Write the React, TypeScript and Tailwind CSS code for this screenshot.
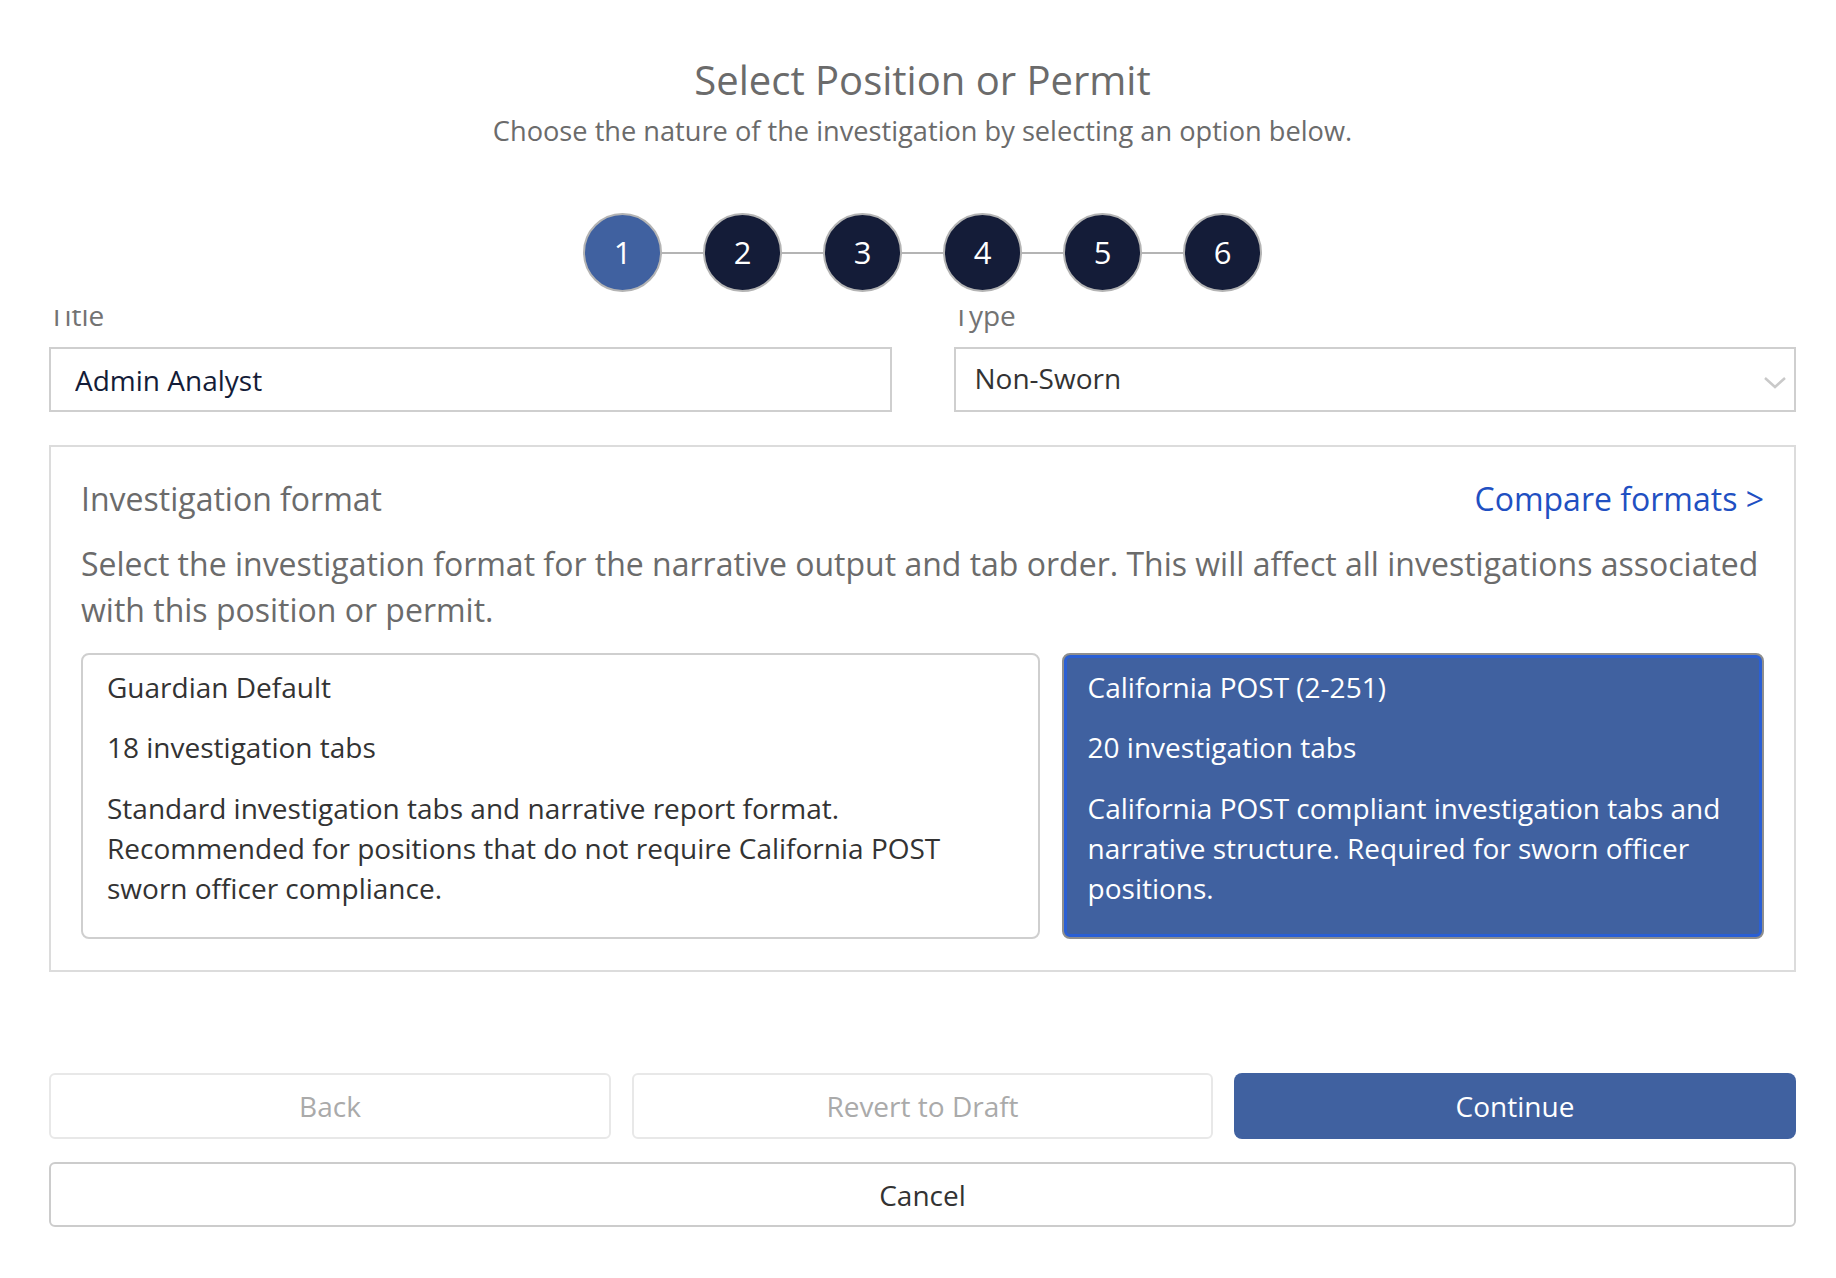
import { useState } from 'react';

interface Format {
  id: string;
  name: string;
  tabs: number;
  description: string;
}

const STEPS = [1, 2, 3, 4, 5, 6];

const FORMATS: Format[] = [
  {
    id: 'guardian',
    name: 'Guardian Default',
    tabs: 18,
    description:
      'Standard investigation tabs and narrative report format. Recommended for positions that do not require California POST sworn officer compliance.'
  },
  {
    id: 'post',
    name: 'California POST (2-251)',
    tabs: 20,
    description:
      'California POST compliant investigation tabs and narrative structure. Required for sworn officer positions.'
  }
];

function Stepper({ current }: { current: number }) {
  return (
    <div className="flex items-center justify-center">
      {STEPS.map((step, i) => (
        <div key={step} className="flex items-center">
          {i > 0 && <div className="h-[2px] w-[41px] bg-[#b4b4b4]" />}
          <div
            className={`flex h-[79px] w-[79px] items-center justify-center rounded-full border-2 border-[#b4b4b4] text-[31px] text-white ${
              step === current ? 'bg-[#4061a0]' : 'bg-[#141c38]'
            }`}
          >
            {step}
          </div>
        </div>
      ))}
    </div>
  );
}

export default function App() {
  const [title, setTitle] = useState('Admin Analyst');
  const [type, setType] = useState('non-sworn');
  const [format, setFormat] = useState('post');

  return (
    <div className="min-h-screen bg-white pl-[49px] pr-[40px] font-['Open_Sans',sans-serif]">
      <div className="relative z-10 h-[310px] bg-white pt-[53px] text-center">
        <h1 className="text-[40px] leading-[54px] text-[#6b6b6b]">Select Position or Permit</h1>
        <p className="mt-[6px] text-[27.2px] leading-[36px] text-[#6b6b6b]">
          Choose the nature of the investigation by selecting an option below.
        </p>
        <div className="mt-[64px]">
          <Stepper current={1} />
        </div>
      </div>

      {/* Scrolled form body */}
      <div className="overflow-hidden">
        <div className="-mt-[14px]">
          <div className="grid grid-cols-2 gap-[62px]">
            <div>
              <label className="block text-[28px] leading-[38px] text-[#737373]">Title</label>
              <input
                value={title}
                onChange={(e) => setTitle(e.target.value)}
                className="mt-[13px] h-[65px] w-full border-2 border-[#cfcfcf] bg-white pl-[24px] text-[28px] text-[#141c38] outline-none"
              />
            </div>
            <div>
              <label className="block text-[28px] leading-[38px] text-[#737373]">Type</label>
              <div className="relative mt-[13px]">
                <select
                  value={type}
                  onChange={(e) => setType(e.target.value)}
                  className="h-[65px] w-full appearance-none border-2 border-[#cfcfcf] bg-white pb-[4px] pl-[19px] text-[28px] text-[#333333] outline-none"
                >
                  <option value="non-sworn">Non-Sworn</option>
                  <option value="sworn">Sworn</option>
                </select>
                <svg
                  className="pointer-events-none absolute right-[9px] top-[29px]"
                  width="24"
                  height="14"
                  viewBox="0 0 24 14"
                  fill="none"
                >
                  <polyline points="2,2 12,11 22,2" stroke="#c9c9c9" strokeWidth="2.5" />
                </svg>
              </div>
            </div>
          </div>

          {/* Investigation format */}
          <div className="mt-[33px] border-2 border-[#dcdcdc] px-[30px] pb-[31px] pt-[30px]">
            <div className="flex items-center justify-between">
              <h2 className="text-[32px] leading-[44px] text-[#6b6b6b]">Investigation format</h2>
              <a href="#" className="text-[32px] leading-[44px] text-[#1f50c2]">
                Compare formats &gt;
              </a>
            </div>
            <p className="mt-[20px] text-[32px] leading-[46px] text-[#6b6b6b]">
              Select the investigation format for the narrative output and tab order. This will affect all
              investigations associated with this position or permit.
            </p>

            <div className="mt-[20px] grid grid-cols-[958fr_702fr] gap-[22px]">
              {FORMATS.map((f) => {
                const selected = f.id === format;
                return (
                  <button
                    key={f.id}
                    type="button"
                    onClick={() => setFormat(f.id)}
                    className={`rounded-[8px] border-2 px-[24px] pb-[29px] pt-[12px] text-left text-[28px] leading-[40px] ${
                      selected
                        ? 'border-[#8e8e8e] bg-[#4061a0] text-white shadow-[inset_0_0_0_3px_#2a5fd4]'
                        : 'border-[#cfcfcf] bg-white text-[#333333]'
                    }`}
                  >
                    <div>{f.name}</div>
                    <div className="mt-[20px]">{f.tabs} investigation tabs</div>
                    <div className="mt-[21px]">{f.description}</div>
                  </button>
                );
              })}
            </div>
          </div>

          {/* Actions */}
          <div className="mt-[101px] grid grid-cols-[562fr_581fr_562fr] gap-[21px]">
            <button
              disabled
              className="h-[66px] rounded-[6px] border-2 border-[#e8e8e8] bg-white text-[28px] text-[#aaaaaa]"
            >
              Back
            </button>
            <button
              disabled
              className="h-[66px] rounded-[6px] border-2 border-[#e8e8e8] bg-white text-[28px] text-[#aaaaaa]"
            >
              Revert to Draft
            </button>
            <button className="h-[66px] rounded-[8px] bg-[#4061a0] text-[28px] text-white">Continue</button>
          </div>
          <button className="mt-[23px] h-[65px] w-full rounded-[6px] border-2 border-[#cccccc] bg-white text-[28px] text-[#333333]">
            Cancel
          </button>
        </div>
      </div>
    </div>
  );
}
